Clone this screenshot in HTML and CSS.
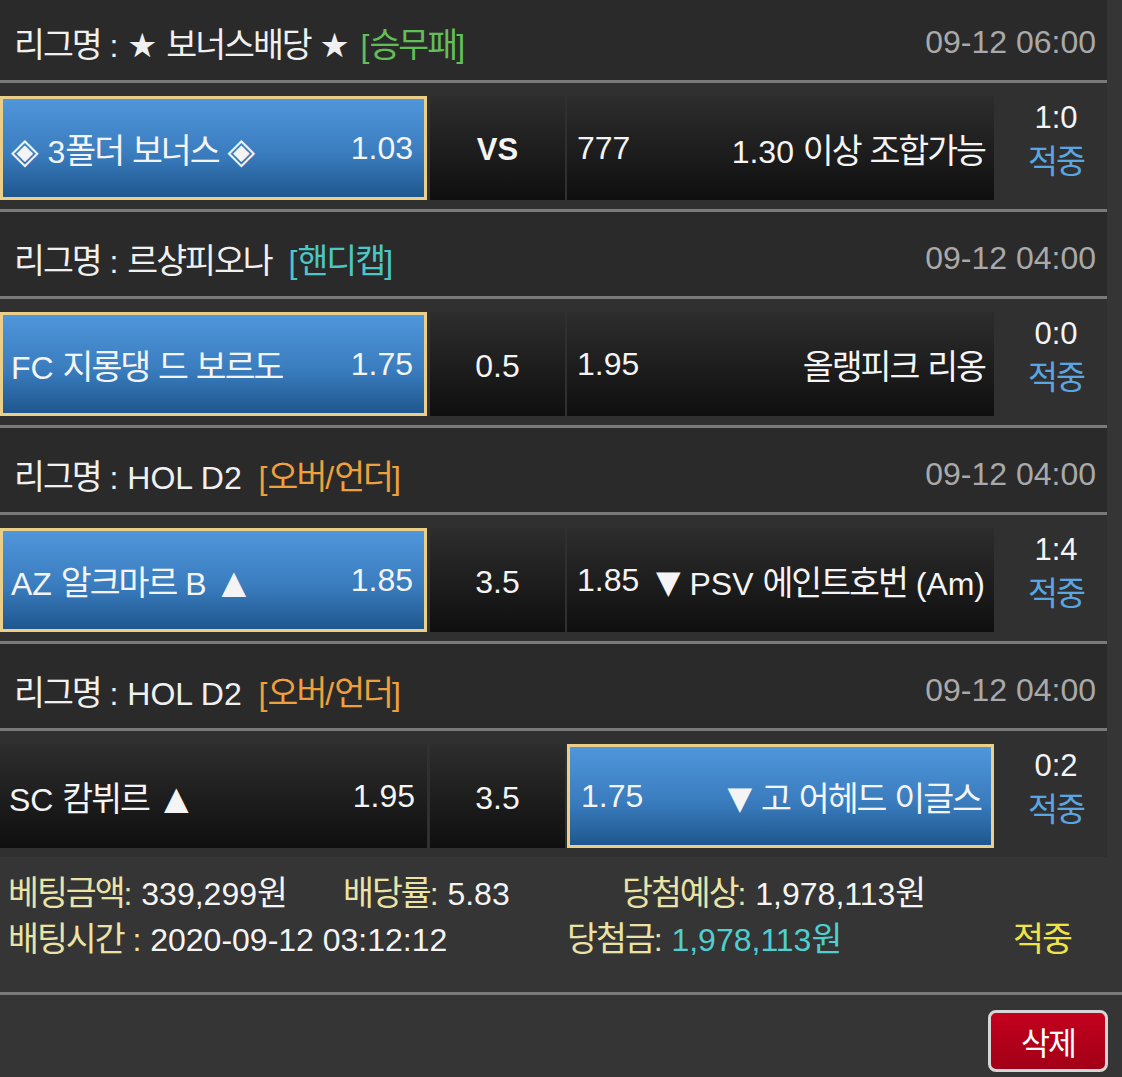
FILE: index.html
```html
<!DOCTYPE html>
<html lang="ko">
<head>
<meta charset="utf-8">
<title>베팅내역</title>
<link rel="stylesheet" href="styles.css">
</head>
<body>
<div class="list">
  <div class="league">
    <div class="lname"><span class="k">리그명</span> : <span class="sym star">★</span> <span class="k">보너스배당</span> <span class="sym star">★</span> <span class="tag tag-near green">[<span class="k">승무패</span>]</span></div>
    <div class="date">09-12 06:00</div>
  </div>
  <div class="match">
    <div class="cell side pick"><span><span class="sym">◈</span> 3<span class="k">폴더</span> <span class="k">보너스</span> <span class="sym">◈</span></span><span>1.03</span></div>
    <div class="cell mid"><b class="vs">VS</b></div>
    <div class="cell side right"><span>777</span><span>1.30 <span class="k">이상</span> <span class="k">조합가능</span></span></div>
    <div class="score"><span>1:0</span><span class="hit k">적중</span></div>
  </div>

  <div class="league">
    <div class="lname"><span class="k">리그명</span> : <span class="k">르샹피오나</span> <span class="tag teal">[<span class="k">핸디캡</span>]</span></div>
    <div class="date">09-12 04:00</div>
  </div>
  <div class="match">
    <div class="cell side pick"><span>FC <span class="k">지롱댕</span> <span class="k">드</span> <span class="k">보르도</span></span><span>1.75</span></div>
    <div class="cell mid"><span>0.5</span></div>
    <div class="cell side right"><span>1.95</span><span><span class="k">올랭피크</span> <span class="k">리옹</span></span></div>
    <div class="score"><span>0:0</span><span class="hit k">적중</span></div>
  </div>

  <div class="league">
    <div class="lname"><span class="k">리그명</span> : HOL D2 <span class="tag orange">[<span class="k">오버</span>/<span class="k">언더</span>]</span></div>
    <div class="date">09-12 04:00</div>
  </div>
  <div class="match">
    <div class="cell side pick"><span>AZ <span class="k">알크마르</span> B <span class="tri up">▲</span></span><span>1.85</span></div>
    <div class="cell mid"><span>3.5</span></div>
    <div class="cell side right"><span>1.85</span><span><span class="tri">▼</span> PSV <span class="k">에인트호번</span> (Am)</span></div>
    <div class="score"><span>1:4</span><span class="hit k">적중</span></div>
  </div>

  <div class="league">
    <div class="lname"><span class="k">리그명</span> : HOL D2 <span class="tag orange">[<span class="k">오버</span>/<span class="k">언더</span>]</span></div>
    <div class="date">09-12 04:00</div>
  </div>
  <div class="match last">
    <div class="cell side left"><span>SC <span class="k">캄뷔르</span> <span class="tri up">▲</span></span><span>1.95</span></div>
    <div class="cell mid"><span>3.5</span></div>
    <div class="cell side pick pick-right"><span>1.75</span><span><span class="tri">▼</span> <span class="k">고</span> <span class="k">어헤드</span> <span class="k">이글스</span></span></div>
    <div class="score"><span>0:2</span><span class="hit k">적중</span></div>
  </div>
</div>

<div class="summary">
  <div class="srow">
    <div class="f-a"><span class="lbl"><span class="k">베팅금액</span>:</span> 339,299<span class="k">원</span></div>
    <div class="f-b"><span class="lbl"><span class="k">배당률</span>:</span> 5.83</div>
    <div><span class="lbl"><span class="k">당첨예상</span>:</span> 1,978,113<span class="k">원</span></div>
  </div>
  <div class="srow">
    <div class="f-c"><span class="lbl"><span class="k">배팅시간</span> :</span> 2020-09-12 03:12:12</div>
    <div class="f-d"><span class="lbl"><span class="k">당첨금</span>:</span> <span class="won">1,978,113<span class="k">원</span></span></div>
    <div class="result k">적중</div>
  </div>
</div>

<div class="actions">
  <button class="del" type="button"><span class="k">삭제</span></button>
</div>
</body>
</html>
```

FILE: styles.css
```css
html, body {
  margin: 0;
  padding: 0;
}

body {
  background: #353535;
  color: #f3f3f3;
  font-family: "Liberation Sans", "Noto Sans CJK KR", sans-serif;
  font-size: 32px;
  width: 1122px;
  height: 1077px;
  overflow: hidden;
}

.k {
  font-size: 1.05em;
  letter-spacing: -0.06em;
}

.k .k {
  font-size: 1em;
}

.sym {
  font-family: "DejaVu Sans", sans-serif;
  font-size: 1.12em;
  line-height: 1;
}

.star {
  font-size: 1.05em;
}

.tri {
  font-family: "DejaVu Sans", sans-serif;
  font-size: 1em;
  line-height: 1;
  position: relative;
  top: -2px;
}

.tri.up {
  margin-left: 6px;
}

.list {
  width: 1107px;
  margin-top: -4px;
}

.league {
  height: 87px;
  box-sizing: border-box;
  padding: 8px 11px 0 14px;
  background: #2a2a2a;
  border-bottom: 3px solid #7a7a7a;
  display: flex;
  align-items: center;
  justify-content: space-between;
  white-space: nowrap;
}

.lname {
  color: #f0f0f0;
}

.tag {
  margin-left: 8px;
}

.tag-near {
  margin-left: 2px;
}

.green { color: #62bf57; }
.teal { color: #4cc6c6; }
.orange { color: #eea03c; }

.date {
  color: #a9a9a9;
}

.match {
  height: 129px;
  box-sizing: border-box;
  padding: 13px 0 9px;
  background: #303030;
  border-bottom: 3px solid #7a7a7a;
  display: flex;
  align-items: stretch;
}

.match.last {
  height: 126px;
  border-bottom: 0;
}

.cell {
  display: flex;
  align-items: center;
  justify-content: space-between;
  box-sizing: border-box;
  white-space: nowrap;
  background: linear-gradient(#2d2d2d, #0f0f0f);
  color: #f4f4f4;
}

.side {
  width: 427px;
  flex: none;
}

.left {
  padding: 0 12px 0 9px;
}

.right {
  width: 427px;
  padding: 0 9px 0 10px;
}

.pick {
  background: linear-gradient(#4f96da, #3a7dbf 55%, #1f578e);
  border: 3px solid #ebcf88;
  padding: 0 11px 0 8px;
}

.pick-right {
  padding: 0 10px 0 11px;
}

.mid {
  width: 135px;
  flex: none;
  margin: 0 2px 0 3px;
  justify-content: center;
  padding-top: 4px;
}

.vs {
  font-weight: bold;
  font-size: 31px;
}

.score {
  flex: 1;
  display: flex;
  flex-direction: column;
  align-items: center;
  padding-left: 11px;
  font-size: 31px;
  line-height: 44px;
  color: #f4f4f4;
}

.hit {
  color: #5aa6e2;
}

.summary {
  padding: 14px 0 29px 8px;
  border-bottom: 3px solid #7a7a7a;
}

.srow {
  display: flex;
  line-height: 45px;
  white-space: nowrap;
  color: #f4f4f4;
}

.f-a { width: 335px; }
.f-b { width: 279px; }
.f-c { width: 559px; }
.f-d { width: 446px; }

.lbl {
  color: #ebe3a6;
}

.won {
  color: #4fcfcf;
}

.result {
  color: #f0e348;
}

.actions {
  display: flex;
  justify-content: flex-end;
  padding: 15px 14px 0 0;
}

.del {
  width: 120px;
  height: 62px;
  box-sizing: border-box;
  border: 3px solid #d6d6d6;
  border-radius: 8px;
  background: linear-gradient(#c4001d, #a20018);
  color: #ffffff;
  font-family: "Liberation Sans", "Noto Sans CJK KR", sans-serif;
  font-size: 30px;
  padding: 0;
}
```
